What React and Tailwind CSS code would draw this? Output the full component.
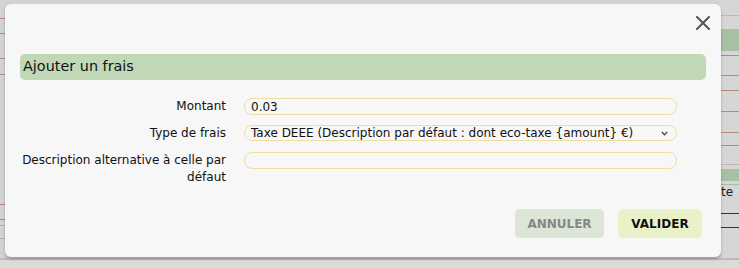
import React from "react";

function Line({ color, mt }) {
  return <div className={`h-px w-full ${color} ${mt}`} />;
}

function Backdrop() {
  return (
    <div className="absolute inset-0 flex bg-[#d3d3d3]">
      <div className="flex w-[6px] flex-col">
        <Line color="bg-[#b58a7e]" mt="mt-[18px]" />
        <Line color="bg-[#b58a7e]" mt="mt-[14px]" />
        <Line color="bg-[#b58a7e]" mt="mt-[24px]" />
        <Line color="bg-[#b58a7e]" mt="mt-[15px]" />
        <Line color="bg-[#b58a7e]" mt="mt-[129px]" />
        <Line color="bg-[#b58a7e]" mt="mt-[14px]" />
        <Line color="bg-[#a9bca2]" mt="mt-[5px]" />
        <Line color="bg-[#a9bca2]" mt="mt-[12px]" />
      </div>
      <div className="flex-1" />
      <div className="flex w-[18px] flex-col bg-[#d6d6d6]">
        <Line color="bg-[#c9b2ad]" mt="mt-[15px]" />
        <div className="mt-[13px] h-[22px] w-full bg-[#a9bfa2]" />
        <Line color="bg-[#b58a7e]" mt="mt-[4px]" />
        <Line color="bg-[#b58a7e]" mt="mt-[19px]" />
        <Line color="bg-[#b58a7e]" mt="mt-[14px]" />
        <Line color="bg-[#b58a7e]" mt="mt-[20px]" />
        <Line color="bg-[#b58a7e]" mt="mt-[20px]" />
        <Line color="bg-[#b58a7e]" mt="mt-[12px]" />
        <Line color="bg-[#c9b2ad]" mt="mt-[18px]" />
        <div className="mt-[4px] h-[12px] w-full bg-[#a9bfa2]" />
        <Line color="bg-[#a9bca2]" mt="mt-[3px]" />
        <div className="text-[12px] leading-[14px] text-[#222]">te</div>
        <Line color="bg-[#333]" mt="mt-[14px]" />
        <Line color="bg-[#333]" mt="mt-[13px]" />
      </div>
      <div className="absolute bottom-0 left-0 right-0 h-[10px] border-t-2 border-[#c4b8b6] bg-[#dadada]" />
    </div>
  );
}

function Field({ label, children }) {
  return (
    <div className="flex items-start">
      <div className="w-[221px] text-right text-[12px] leading-[17px] text-[#111]">
        {label}
      </div>
      <div className="ml-[18px] w-[433px]">{children}</div>
    </div>
  );
}

export default function App() {
  return (
    <div
      className="relative h-[268px] w-[739px] overflow-hidden"
      style={{ fontFamily: '"DejaVu Sans", Verdana, sans-serif' }}
    >
      <Backdrop />
      <div className="absolute left-[5px] top-[4px] flex h-[253px] w-[716px] flex-col rounded-[6px] bg-[#f7f7f7] shadow-[0_2px_3px_rgba(0,0,0,0.25)]">
        <div className="flex h-[50px] justify-end pr-[11px] pt-[12px]">
          <svg width="14" height="14" viewBox="0 0 14 14">
            <path d="M1 1 L13 13 M13 1 L1 13" stroke="#555" strokeWidth="2" strokeLinecap="round" />
          </svg>
        </div>
        <div className="mx-[15px] flex h-[26px] items-center rounded-[5px] bg-[#c0d8b6] pl-[3px] text-[14.4px] text-[#111]">
          Ajouter un frais
        </div>
        <div className="mt-[18px] flex flex-col gap-[10px]">
          <Field label="Montant">
            <div className="flex h-[17px] items-center rounded-[8px] border border-[#f2dc9e] bg-[#f7f7f7] pl-[6px] text-[12px] text-[#111]">
              0.03
            </div>
          </Field>
          <Field label="Type de frais">
            <div className="flex h-[16px] items-center justify-between rounded-[8px] border border-[#f2dc9e] bg-[#f7f7f7] pl-[6px] pr-[8px] text-[12px] text-[#111]">
              <span>Taxe DEEE (Description par défaut : dont eco-taxe {"{amount}"} €)</span>
              <svg width="7" height="5" viewBox="0 0 7 5">
                <path d="M0.8 0.8 L3.5 3.8 L6.2 0.8" fill="none" stroke="#333" strokeWidth="1.2" />
              </svg>
            </div>
          </Field>
          <Field label={<>Description alternative à celle par<br />défaut</>}>
            <div className="h-[17px] rounded-[8px] border border-[#f2dc9e] bg-[#f7f7f7]" />
          </Field>
        </div>
        <div className="mt-auto mb-[19px] flex justify-end gap-[14px] pr-[19px]">
          <button className="h-[29px] w-[89px] rounded-[5px] bg-[#dbe6d9] text-[12px] font-bold text-[#878787]">
            ANNULER
          </button>
          <button className="h-[29px] w-[84px] rounded-[5px] bg-[#e8f1c8] text-[12px] font-bold text-[#111]">
            VALIDER
          </button>
        </div>
      </div>
    </div>
  );
}
